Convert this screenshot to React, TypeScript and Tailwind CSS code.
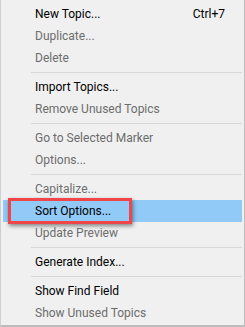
import React from "react";

type Item =
  | { kind: "item"; label: string; disabled?: boolean; shortcut?: string; highlight?: boolean }
  | { kind: "sep" };

const items: Item[] = [
  { kind: "item", label: "New Topic...", shortcut: "Ctrl+7" },
  { kind: "item", label: "Duplicate...", disabled: true },
  { kind: "item", label: "Delete", disabled: true },
  { kind: "sep" },
  { kind: "item", label: "Import Topics..." },
  { kind: "item", label: "Remove Unused Topics", disabled: true },
  { kind: "sep" },
  { kind: "item", label: "Go to Selected Marker", disabled: true },
  { kind: "item", label: "Options...", disabled: true },
  { kind: "sep" },
  { kind: "item", label: "Capitalize...", disabled: true },
  { kind: "item", label: "Sort Options...", highlight: true },
  { kind: "item", label: "Update Preview", disabled: true },
  { kind: "sep" },
  { kind: "item", label: "Generate Index..." },
  { kind: "sep" },
  { kind: "item", label: "Show Find Field" },
  { kind: "item", label: "Show Unused Topics", disabled: true },
];

export default function App() {
  return (
    <div
      className="relative w-[245px] h-[327px] bg-[#f0f0f0] border-l border-r border-b-2 border-l-[#cfcfcf] border-r-[#bdbdbd] border-b-[#bdbdbd] pt-[3px] flex flex-col text-[12px]"
      style={{ fontFamily: 'Roboto, "Noto Sans", sans-serif' }}
    >
      {items.map((it, i) =>
        it.kind === "sep" ? (
          <div key={i} className="h-[7px] flex items-center ml-[30px] mr-[2px]">
            <div className="h-px w-full bg-[#d7d7d7]" />
          </div>
        ) : (
          <div key={i} className="relative h-[22px]">
            {it.highlight && (
              <div className="absolute left-[2px] right-[2px] top-0 bottom-0 bg-[#91c9f7]" />
            )}
            <div
              className={`relative h-full flex items-center pl-[34px] pr-[19px] ${
                it.disabled ? "text-[#6d6d6d]" : "text-black"
              }`}
            >
              <span className="flex-1 leading-none">{it.label}</span>
              {it.shortcut && <span className="leading-none">{it.shortcut}</span>}
            </div>
            {it.highlight && (
              <div className="absolute left-[7px] top-[-2px] w-[124px] h-[26px] border-[3px] border-[#f0464a] shadow-[1px_2px_4px_rgba(0,0,0,0.45)]" />
            )}
          </div>
        )
      )}
    </div>
  );
}
